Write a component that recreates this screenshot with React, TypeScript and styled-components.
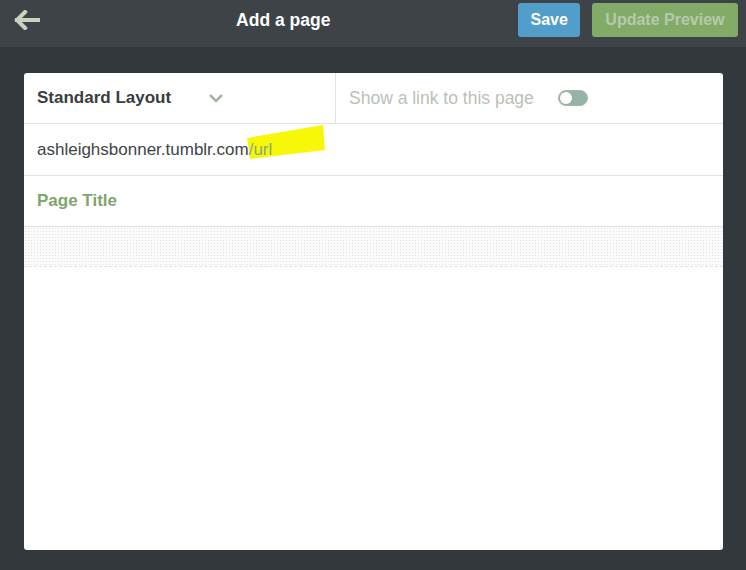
import React from "react";
import styled, { createGlobalStyle } from "styled-components";

const Global = createGlobalStyle`
  html, body { margin: 0; padding: 0; background: #33383c; }
  body { font-family: "Liberation Sans", Arial, sans-serif; width: 746px; height: 570px; overflow: hidden; }
`;

const Page = styled.div`
  width: 746px;
  height: 570px;
  display: flex;
  flex-direction: column;
  background: #33383c;
`;

const Header = styled.header`
  height: 47px;
  background: #3e4347;
  display: flex;
  align-items: flex-start;
  padding: 0 8px 0 13px;
  box-sizing: border-box;
`;

const BackButton = styled.div`
  width: 27px;
  height: 20px;
  margin-top: 10px;
  display: flex;
`;

const Title = styled.h1`
  flex: 1;
  margin: 0;
  padding-top: 10px;
  padding-left: 20px;
  text-align: center;
  color: #fff;
  font-size: 17.5px;
  font-weight: bold;
  line-height: 20px;
`;

const Btn = styled.button<{ $variant: "blue" | "green" }>`
  margin-top: 3px;
  height: 34px;
  border: none;
  border-radius: 3px;
  font-family: "Liberation Sans", Arial, sans-serif;
  font-weight: bold;
  font-size: 16px;
  padding: 0 ${(p) => (p.$variant === "blue" ? "12px" : "13.5px")};
  margin-left: 12px;
  background: ${(p) => (p.$variant === "blue" ? "#529ecb" : "#82ab68")};
  color: ${(p) => (p.$variant === "blue" ? "#ffffff" : "#b7c9ad")};
`;

const Body = styled.main`
  flex: 1;
  padding: 26px 23px 20px 24px;
  display: flex;
`;

const Card = styled.section`
  flex: 1;
  background: #fff;
  border-radius: 3px;
  display: flex;
  flex-direction: column;
  overflow: hidden;
`;

const Row = styled.div<{ $h: number }>`
  height: ${(p) => p.$h}px;
  flex-shrink: 0;
  border-bottom: 1px solid #e2e2e2;
  display: flex;
  align-items: center;
  box-sizing: border-box;
  position: relative;
`;

const LayoutCell = styled.div`
  width: 312px;
  height: 100%;
  box-sizing: border-box;
  padding-left: 13px;
  border-right: 1px solid #e2e2e2;
  display: flex;
  align-items: center;
`;

const LayoutLabel = styled.span`
  font-size: 17px;
  font-weight: bold;
  color: #383d40;
  width: 171px;
`;

const LinkCell = styled.div`
  flex: 1;
  padding-left: 13px;
  display: flex;
  align-items: center;
`;

const LinkLabel = styled.span`
  color: #b9c2b6;
  font-size: 17.5px;
  width: 209px;
`;

const Toggle = styled.div`
  width: 30px;
  height: 16px;
  border-radius: 8px;
  background: #94b4a8;
  position: relative;
  box-sizing: border-box;
  border: 1px solid #a3bb9f;
`;

const Knob = styled.div`
  position: absolute;
  left: 1px;
  top: 1px;
  width: 12px;
  height: 12px;
  border-radius: 50%;
  background: #fff;
`;

const UrlText = styled.span`
  padding-left: 13px;
  font-size: 17px;
  color: #3e4446;
  position: relative;
  z-index: 1;
`;

const UrlPart = styled.span`
  color: #8fa77f;
`;

const Highlight = styled.svg`
  position: absolute;
  left: 0;
  top: 0;
  z-index: 0;
`;

const PageTitle = styled.span`
  padding-left: 13px;
  font-size: 17px;
  font-weight: bold;
  color: #7ea56b;
`;

const Dotted = styled.div`
  height: 40px;
  flex-shrink: 0;
  border-bottom: 1px dashed #e4e4e4;
  box-sizing: border-box;
  background-color: #fbfbfb;
  background-image: radial-gradient(circle, #e2e2e2 0.7px, transparent 0.8px);
  background-size: 3px 3px;
`;

export default function App() {
  return (
    <>
      <Global />
      <Page>
        <Header>
          <BackButton>
            <svg width="27" height="20" viewBox="0 0 27 20">
              <path
                d="M12 2 L4 10 L12 18 M4 10 L25 10"
                stroke="#c9d3c0"
                strokeWidth="4"
                fill="none"
                strokeLinecap="square"
              />
            </svg>
          </BackButton>
          <Title>Add a page</Title>
          <Btn $variant="blue">Save</Btn>
          <Btn $variant="green">Update Preview</Btn>
        </Header>
        <Body>
          <Card>
            <Row $h={51}>
              <LayoutCell>
                <LayoutLabel>Standard Layout</LayoutLabel>
                <svg width="16" height="10" viewBox="0 0 16 10">
                  <path d="M2 2 L8 8 L14 2" stroke="#a3b89a" strokeWidth="2.5" fill="none" />
                </svg>
              </LayoutCell>
              <LinkCell>
                <LinkLabel>Show a link to this page</LinkLabel>
                <Toggle>
                  <Knob />
                </Toggle>
              </LinkCell>
            </Row>
            <Row $h={52}>
              <Highlight width="320" height="50" viewBox="0 0 320 50">
                <polygon points="223,14 299,1 301,26 226,35" fill="#f7f708" />
              </Highlight>
              <UrlText>
                ashleighsbonner.tumblr.com<UrlPart>/url</UrlPart>
              </UrlText>
            </Row>
            <Row $h={51}>
              <PageTitle>Page Title</PageTitle>
            </Row>
            <Dotted />
          </Card>
        </Body>
      </Page>
    </>
  );
}
